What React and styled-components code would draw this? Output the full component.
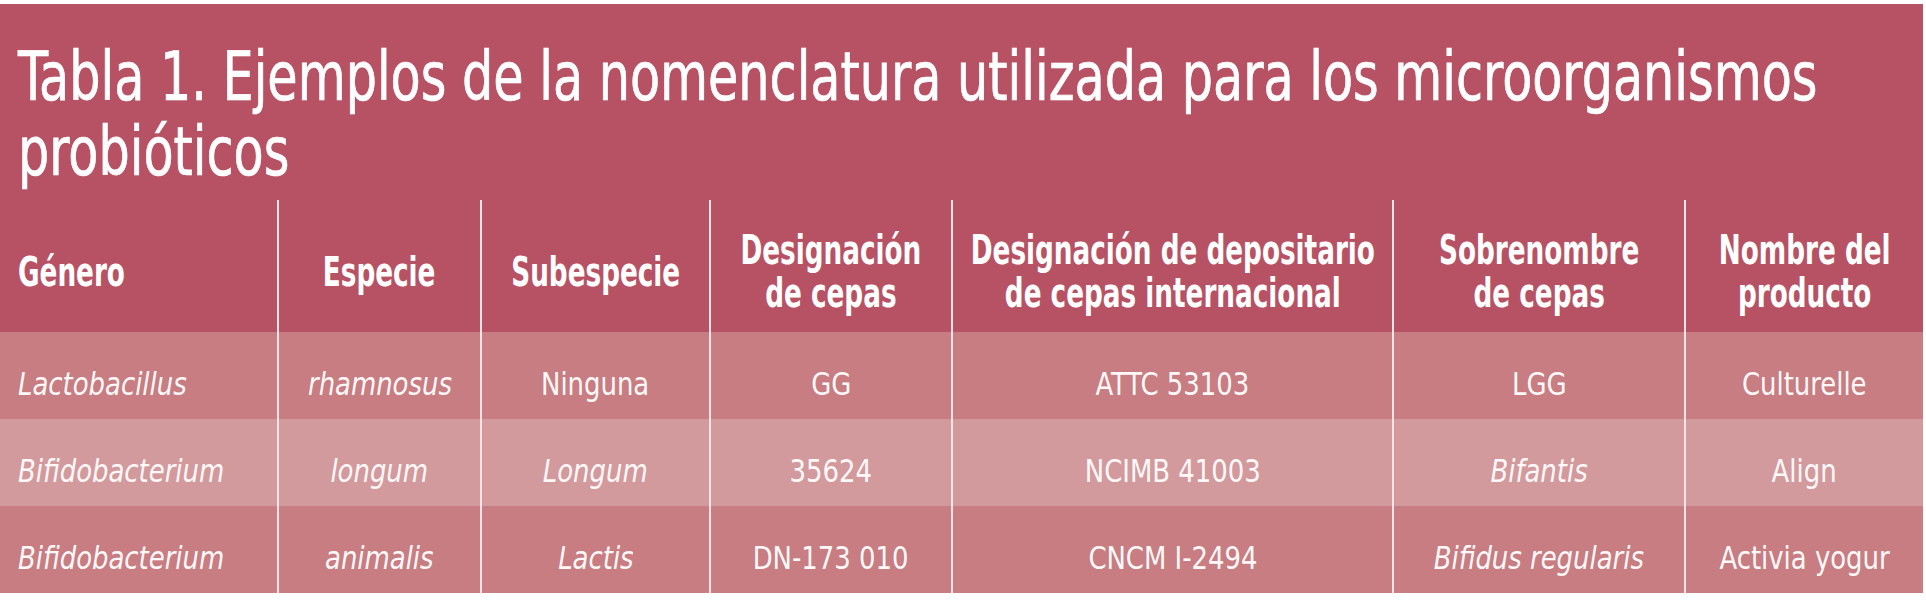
import React from 'react';
import styled, { createGlobalStyle } from 'styled-components';

// No condensed face is installed, so the condensed look is made by squeezing
// DejaVu Sans Condensed horizontally.
const TITLE_K = 0.805;
const HEAD_K = 0.73;
const BODY_K = 0.9;

const GlobalStyle = createGlobalStyle`
  html, body {
    margin: 0;
    padding: 0;
    background: #ffffff;
  }
  body {
    font-family: 'DejaVu Sans Condensed', 'DejaVu Sans', sans-serif;
    font-stretch: condensed;
  }
`;

const Wrapper = styled.div`
  padding: 4px 3px 12px 0;
  overflow: hidden;
`;

const Panel = styled.section`
  background: #b75265;
  color: #ffffff;
`;

const Title = styled.h1`
  margin: 0;
  padding: 35px 30px 11px 18px;
  font-size: 68px;
  font-weight: 400;
  line-height: 75px;
  -webkit-text-stroke: 0.7px #ffffff;
`;

const TitleText = styled.span`
  display: block;
  width: calc(100% / ${TITLE_K});
  transform: scaleX(${TITLE_K});
  transform-origin: left top;
`;

const Squeeze = styled.span`
  display: inline-block;
  white-space: nowrap;
  transform: scaleX(${p => p.$k});
  transform-origin: ${p => (p.$left ? 'left center' : 'center center')};
`;

const Grid = styled.div`
  display: grid;
  grid-template-columns: 277px 203px 229px 242px 441px 292px 1fr;
`;

const Cell = styled.div`
  display: flex;
  align-items: center;
  justify-content: ${p => (p.$left ? 'flex-start' : 'center')};
  text-align: ${p => (p.$left ? 'left' : 'center')};
  padding-left: ${p => (p.$left ? '18px' : '0')};
  border-left: ${p => (p.$first ? 'none' : '2px solid #f7e3e6')};
  box-sizing: border-box;
  min-width: 0;
`;

const HeadCell = styled(Cell)`
  height: 132px;
  padding-top: 12px;
  font-size: 40px;
  font-weight: 700;
  line-height: 43px;
`;

const BodyCell = styled(Cell)`
  height: 87px;
  padding-top: 16px;
  background: ${p => (p.$alt ? '#d39a9e' : '#c77d82')};
  font-size: 32px;
  font-weight: 400;
  font-style: ${p => (p.$italic ? 'italic' : 'normal')};
  color: #fff8f8;
`;

const headers = [
  ['Género'],
  ['Especie'],
  ['Subespecie'],
  ['Designación', 'de cepas'],
  ['Designación de depositario', 'de cepas internacional'],
  ['Sobrenombre', 'de cepas'],
  ['Nombre del', 'producto'],
];

// [text, italic]
const rows = [
  [
    ['Lactobacillus', true],
    ['rhamnosus', true],
    ['Ninguna', false],
    ['GG', false],
    ['ATTC 53103', false],
    ['LGG', false],
    ['Culturelle', false],
  ],
  [
    ['Bifidobacterium', true],
    ['longum', true],
    ['Longum', true],
    ['35624', false],
    ['NCIMB 41003', false],
    ['Bifantis', true],
    ['Align', false],
  ],
  [
    ['Bifidobacterium', true],
    ['animalis', true],
    ['Lactis', true],
    ['DN-173 010', false],
    ['CNCM I-2494', false],
    ['Bifidus regularis', true],
    ['Activia yogur', false],
  ],
];

export default function App() {
  return (
    <Wrapper>
      <GlobalStyle />
      <Panel>
        <Title>
          <TitleText>Tabla 1. Ejemplos de la nomenclatura utilizada para los microorganismos probióticos</TitleText>
        </Title>
        <Grid>
          {headers.map((lines, i) => (
            <HeadCell key={i} $first={i === 0} $left={i === 0}>
              <Squeeze $k={HEAD_K} $left={i === 0}>
                {lines.map((l, j) => (
                  <React.Fragment key={j}>
                    {j > 0 && <br />}
                    {l}
                  </React.Fragment>
                ))}
              </Squeeze>
            </HeadCell>
          ))}
          {rows.map((row, r) =>
            row.map(([text, italic], i) => (
              <BodyCell key={`${r}-${i}`} $first={i === 0} $left={i === 0} $alt={r === 1} $italic={italic}>
                <Squeeze $k={BODY_K} $left={i === 0}>
                  {text}
                </Squeeze>
              </BodyCell>
            )),
          )}
        </Grid>
      </Panel>
    </Wrapper>
  );
}
